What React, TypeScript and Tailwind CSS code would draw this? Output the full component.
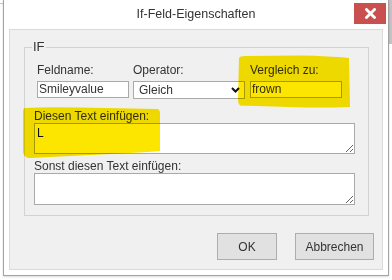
import React from "react";

const Field = ({ label, children, className = "" }: { label: string; children: React.ReactNode; className?: string }) => (
  <div className={`flex flex-col ${className}`}>
    <span className="h-[20px] pt-[2px] leading-[14px]">{label}</span>
    {children}
  </div>
);

export default function App() {
  return (
    <div className="relative w-[392px] h-[280px] overflow-hidden bg-white font-['Liberation_Sans',Arial,sans-serif] text-[12px] text-[#333]">
      {/* page bits behind the dialog */}
      <div className="absolute left-0 top-[3px] w-[4px] h-px bg-[#c8c8c8]" />
      <div className="absolute left-[272px] top-0 w-px h-[3px] bg-[#c8c8c8]" />
      <div className="absolute right-0 top-0 w-[3px] h-[44px] bg-[#c4c4c4]" />

      <div className="relative ml-[3px] w-[386px] h-[276px] bg-white border-x border-b border-[#a3a3a3] shadow-[0_1px_2px_rgba(0,0,0,0.15)] flex flex-col">
        <div className="relative h-[29px] flex items-center justify-center text-[12.5px] text-[#333]">
          If-Feld-Eigenschaften
          <button className="absolute right-[2px] top-[3px] w-[32px] h-[21px] bg-[#c9504e] flex items-center justify-center">
            <svg width="11" height="11" viewBox="0 0 11 11">
              <path d="M1.5 1.5 L9.5 9.5 M9.5 1.5 L1.5 9.5" stroke="#fff" strokeWidth="2.8" strokeLinecap="square" />
            </svg>
          </button>
        </div>

        <div className="mx-[5px] h-[241px] border border-[#dadada] bg-[#f0f0f0] flex flex-col pt-[10px]">
          <fieldset className="ml-[14px] w-[345px] border border-[#d3d3d3] pl-[9px] pr-[12px] pb-[10px] pt-[7px]">
            <legend className="px-[1px] -ml-[2px] leading-[14px] text-[13px]">IF</legend>
            <div className="flex pl-[3px]">
              <Field label="Feldname:" className="w-[96px]">
                <div className="w-[92px] h-[17px] border border-[#a9a9a9] bg-white pl-[1px] leading-[15px]">Smileyvalue</div>
              </Field>
              <Field label="Operator:" className="w-[117px]">
                <div className="w-[112px] h-[18px] border border-[#a9a9a9] bg-white pl-[5px] pr-[4px] flex items-center justify-between leading-[16px]">
                  <span>Gleich</span>
                  <svg width="9" height="6" viewBox="0 0 9 6">
                    <path d="M1 1 L4.5 4.5 L8 1" stroke="#111" strokeWidth="2" fill="none" />
                  </svg>
                </div>
              </Field>
              <Field label="Vergleich zu:">
                <div className="w-[92px] h-[17px] border border-[#a9a9a9] bg-white pl-[1px] leading-[15px]">frown</div>
              </Field>
            </div>
            <div className="mt-[10px] leading-[14px]">Diesen Text einfügen:</div>
            <textarea
              defaultValue="L"
              className="block w-[321px] h-[31px] border border-[#a9a9a9] bg-white px-[2px] py-[2px] leading-[14px] text-[12px] text-[#111] font-['Liberation_Sans',Arial,sans-serif] outline-none"
            />
            <div className="mt-[5px] leading-[14px]">Sonst diesen Text einfügen:</div>
            <textarea className="block w-[321px] h-[32px] border border-[#a9a9a9] bg-white px-[2px] py-[2px] text-[12px] outline-none" />
          </fieldset>

          <div className="mt-auto mb-[9px] mr-[8px] flex justify-end gap-[18px]">
            <button className="w-[60px] h-[27px] border border-[#adadad] bg-[#e1e1e1] text-[#333]">OK</button>
            <button className="w-[79px] h-[27px] border border-[#adadad] bg-[#e1e1e1] text-[#333]">Abbrechen</button>
          </div>
        </div>
      </div>

      {/* highlighter marks */}
      <svg className="absolute inset-0 pointer-events-none mix-blend-multiply" width="392" height="280" viewBox="0 0 392 280">
        <path d="M239 58 Q240 56 246 56 L300 55.5 Q330 56 349 58 L350 107 Q320 108 290 107 L240 105.5 Q238 104 238 100 Z" fill="#fce600" />
        <path d="M25 108 Q40 107 80 107.5 L158 109 Q160 110 160 114 L160 151 Q150 152 130 153 L30 158 Q24 158 23 152 L23 112 Q23 108 25 108 Z" fill="#fce600" />
      </svg>
    </div>
  );
}
